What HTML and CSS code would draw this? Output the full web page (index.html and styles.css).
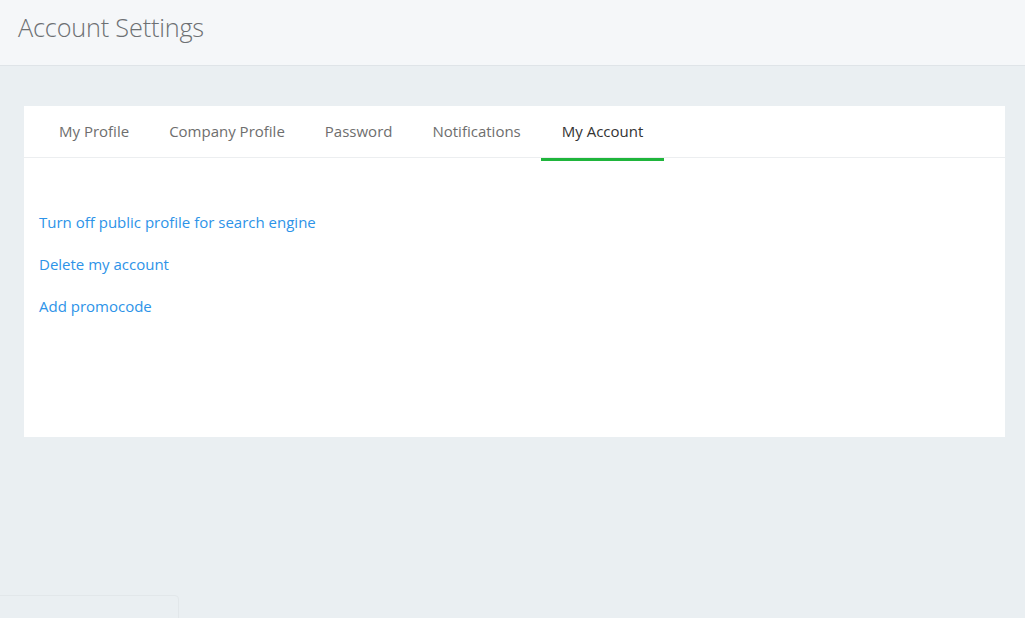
FILE: index.html
```html
<!DOCTYPE html>
<html>
<head>
<meta charset="utf-8">
<link rel="stylesheet" href="styles.css">
</head>
<body>
<header class="page-header">
  <h1 class="title">Account Settings</h1>
</header>
<main class="content">
  <section class="card">
    <nav class="tabs">
      <a class="tab">My Profile</a>
      <a class="tab">Company Profile</a>
      <a class="tab">Password</a>
      <a class="tab">Notifications</a>
      <a class="tab active">My Account</a>
    </nav>
    <div class="card-body">
      <a class="link">Turn off public profile for search engine</a>
      <a class="link">Delete my account</a>
      <a class="link">Add promocode</a>
    </div>
  </section>
</main>
<div class="widget"></div>
</body>
</html>
```

FILE: styles.css
```css
* { box-sizing: border-box; }
html, body { margin: 0; padding: 0; }
body {
  font-family: "Open Sans", "Liberation Sans", sans-serif;
  background: #eaeff2;
  height: 618px;
  overflow: hidden;
  position: relative;
}
.page-header {
  background: #f5f7f9;
  border-bottom: 1px solid #dfe4e8;
  height: 66px;
  padding: 0 18px;
  display: flex;
  align-items: center;
}
.title {
  margin: 0;
  font-weight: 300;
  font-size: 25.3px;
  color: #6d7073;
  letter-spacing: -0.2px;
  position: relative;
  top: -6px;
}
.content {
  padding: 40px 20px 0 24px;
}
.card {
  background: #fff;
  height: 331px;
}
.tabs {
  display: flex;
  padding: 0 15px;
  height: 52px;
  border-bottom: 1px solid #eceef0;
}
.tab {
  padding: 0 20px;
  font-size: 15px;
  color: #6e6e6e;
  line-height: 50px;
  cursor: pointer;
}
.tab.active {
  color: #333;
  border-bottom: 3px solid #1fb53c;
  height: 55px;
  padding: 0 21px 0 21px;
}
.card-body {
  padding: 54px 15px 0;
  display: flex;
  flex-direction: column;
  align-items: flex-start;
  gap: 21px;
}
.link {
  font-size: 15px;
  line-height: 21px;
  color: #2d93e8;
  cursor: pointer;
}
.widget {
  position: absolute;
  left: -6px;
  top: 595px;
  width: 185px;
  height: 40px;
  border: 1px solid #e2e7ea;
  border-radius: 4px;
  background: #eaeff2;
}
```
